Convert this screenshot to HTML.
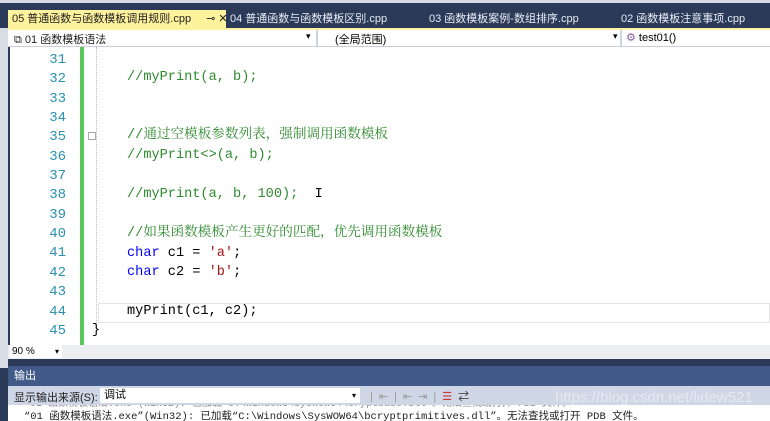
<!DOCTYPE html>
<html><head><meta charset="utf-8"><style>
*{margin:0;padding:0;box-sizing:border-box}
body{width:770px;height:421px;overflow:hidden;background:#2b3a58;font-family:"Liberation Sans","Noto Sans CJK SC",sans-serif;position:relative}
.abs{position:absolute}
.tab{position:absolute;top:10px;height:18px;font-size:11px;line-height:18px;color:#e8ecf4;white-space:nowrap}
.code{position:absolute;left:10px;top:47px;width:760px;height:298px;background:#fff}
.ln{position:absolute;left:10px;width:56px;height:19px;line-height:19px;text-align:right;font-family:"Liberation Mono","Noto Serif CJK SC",monospace;font-size:14px;color:#2b91af}
.cl{position:absolute;left:127px;height:19px;line-height:19px;font-family:"Liberation Mono","Noto Serif CJK SC",monospace;font-size:13.6px;color:#000;white-space:pre}
.cm{color:#2e8b2e}.kw{color:#0000ff}.st{color:#a31515}
</style></head><body>
<div class="abs" style="left:0;top:0;width:770px;height:10px;background:#d6dbe4"></div>
<div class="abs" style="left:0;top:3px;width:770px;height:7px;background:#2b3a58"></div>
<div class="tab" style="left:8px;width:218px;background:#fff29d;color:#1e1e1e;padding-left:4px">05 普通函数与函数模板调用规则.cpp <span style="margin-left:12px">⊸ ✕</span></div>
<div class="tab" style="left:230px">04 普通函数与函数模板区别.cpp</div>
<div class="tab" style="left:429px">03 函数模板案例-数组排序.cpp</div>
<div class="tab" style="left:621px">02 函数模板注意事项.cpp</div>
<div class="abs" style="left:8px;top:28px;width:762px;height:2px;background:#fff29d"></div>
<div class="abs" style="left:8px;top:30px;width:762px;height:17px;background:#fff;border-bottom:1px solid #ccd"></div>
<div class="abs" style="left:14px;top:31px;font-size:11px;color:#1e1e1e">⧉ 01 函数模板语法</div>
<div class="abs" style="left:306px;top:31px;font-size:9px">▾</div>
<div class="abs" style="left:316px;top:30px;width:2px;height:17px;background:#ccd3de"></div>
<div class="abs" style="left:335px;top:31px;font-size:11px">(全局范围)</div>
<div class="abs" style="left:613px;top:31px;font-size:9px">▾</div>
<div class="abs" style="left:620px;top:30px;width:2px;height:17px;background:#ccd3de"></div>
<div class="abs" style="left:626px;top:31px;font-size:11px"><span style="color:#8a5aa8">⚙</span> test01()</div>
<div class="abs" style="left:0;top:28px;width:8px;height:340px;background:#d8dce4"></div>
<div class="code"></div>
<div class="abs" style="left:80px;top:47px;width:4px;height:298px;background:#5cc65c"></div>
<div class="abs" style="left:96px;top:47px;width:0;height:280px;border-left:1px dotted #bbb"></div>
<div class="abs" style="left:88px;top:132px;width:8px;height:8px;border:1px solid #aaa"></div>
<div class="abs" style="left:98px;top:303px;width:672px;height:20px;border:1px solid #e4e4e4"></div>
<div class="ln" style="top:51px">31</div><div class="ln" style="top:70px">32</div><div class="ln" style="top:90px">33</div><div class="ln" style="top:109px">34</div><div class="ln" style="top:128px">35</div><div class="ln" style="top:148px">36</div><div class="ln" style="top:167px">37</div><div class="ln" style="top:186px">38</div><div class="ln" style="top:206px">39</div><div class="ln" style="top:225px">40</div><div class="ln" style="top:244px">41</div><div class="ln" style="top:264px">42</div><div class="ln" style="top:283px">43</div><div class="ln" style="top:303px">44</div><div class="ln" style="top:322px">45</div>
<div class="cl cm" style="top:68px">//myPrint(a, b);</div>
<div class="cl cm" style="top:126px">//通过空模板参数列表，强制调用函数模板</div>
<div class="cl cm" style="top:146px">//myPrint&lt;&gt;(a, b);</div>
<div class="cl cm" style="top:185px">//myPrint(a, b, 100);  <span style="color:#000">I</span></div>
<div class="cl cm" style="top:224px">//如果函数模板产生更好的匹配，优先调用函数模板</div>
<div class="cl" style="top:244px"><span class="kw">char</span> c1 = <span class="st">'a'</span>;</div>
<div class="cl" style="top:263px"><span class="kw">char</span> c2 = <span class="st">'b'</span>;</div>
<div class="cl" style="top:302px">myPrint(c1, c2);</div>
<div class="cl" style="top:321px;left:92px">}</div>
<div class="abs" style="left:8px;top:345px;width:762px;height:14px;background:#eceef2"></div>
<div class="abs" style="left:10px;top:345px;width:52px;height:13px;background:#fff;font-size:10px;padding-left:2px;line-height:13px">90 % <span style="float:right;margin-right:3px;font-size:8px">▾</span></div>
<div class="abs" style="left:8px;top:366px;width:762px;height:20px;background:#425a8a;color:#fff;font-size:11px;padding-left:6px;line-height:20px">输出</div>
<div class="abs" style="left:8px;top:386px;width:762px;height:19px;background:#cfd6e5"></div>
<div class="abs" style="left:14px;top:389px;font-size:11px;color:#1e1e1e">显示输出来源(S):</div>
<div class="abs" style="left:100px;top:388px;width:260px;height:15px;background:#fff;font-size:11px;padding-left:4px;line-height:15px">调试<span style="float:right;margin-right:4px;font-size:8px">▾</span></div>
<div class="abs" style="left:370px;top:388px;font-size:11px;color:#999;letter-spacing:6px">|⇤|⇤⇥|<span style="color:#c33">☰</span><span style="color:#333">⇄</span></div>
<div class="abs" style="left:555px;top:389px;font-size:15px;color:#e6e9ef">https://blog.csdn.net/lidew521</div>
<div class="abs" style="left:8px;top:405px;width:762px;height:16px;background:#fff;overflow:hidden">
<div class="abs" style="left:16px;top:-6px;font-size:10px;line-height:11px;color:#888;white-space:nowrap;font-family:'Liberation Mono','Noto Sans CJK SC',monospace">“01 函数模板语法.exe”(Win32): 已加载“C:\Windows\SysWOW64\cryptbase.dll”。无法查找或打开 PDB 文件。</div>
<div class="abs" style="left:16px;top:6px;font-size:10.5px;line-height:12px;color:#222;white-space:nowrap;font-family:'Liberation Mono','Noto Sans CJK SC',monospace">“01 函数模板语法.exe”(Win32): 已加载“C:\Windows\SysWOW64\bcryptprimitives.dll”。无法查找或打开 PDB 文件。</div>
</div>
</body></html>
